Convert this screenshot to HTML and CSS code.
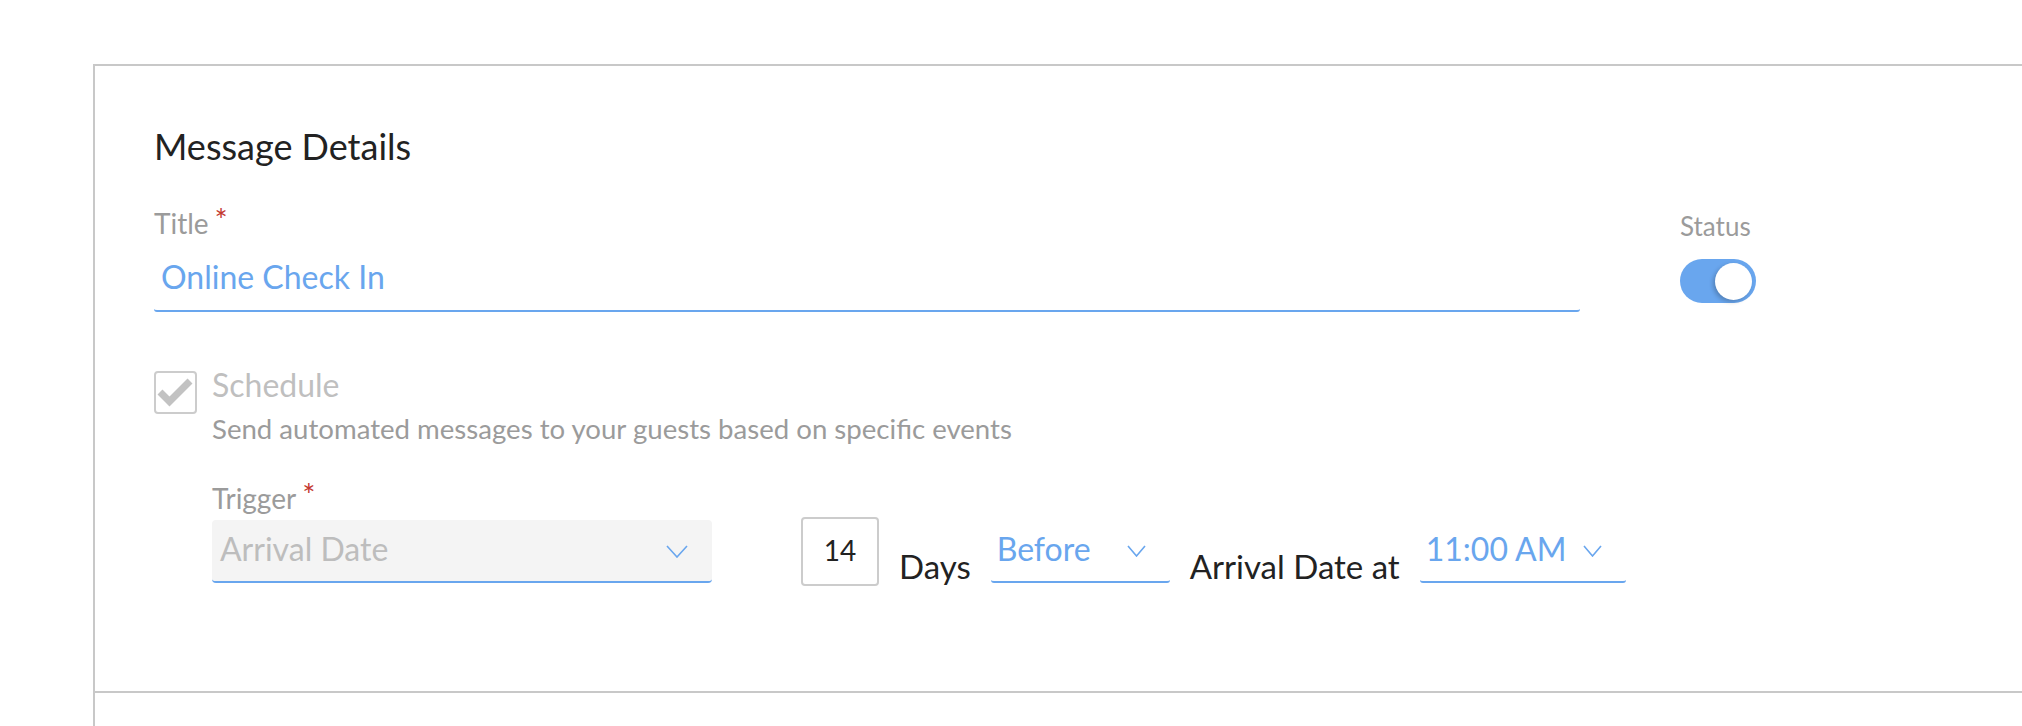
FILE: index.html
```html
<!DOCTYPE html>
<html lang="en">
<head>
<meta charset="utf-8">
<title>Message Details</title>
<link rel="stylesheet" href="styles.css">
</head>
<body>
<div class="page">
  <div class="card">
    <section class="section details">
      <h2 class="section-title">Message Details</h2>
      <div class="title-row">
        <div class="field field-title">
          <label class="field-label">Title<span class="req">*</span></label>
          <div class="text-input">Online Check In</div>
        </div>
        <div class="status">
          <div class="status-label">Status</div>
          <div class="toggle"><span class="knob"></span></div>
        </div>
      </div>
      <div class="schedule">
        <div class="checkbox">
          <svg width="39" height="39" viewBox="0 0 39 39"><polyline points="4,19 13.5,28.5 34,8" fill="none" stroke="#c2c2c2" stroke-width="7"/></svg>
        </div>
        <div class="schedule-body">
          <div class="schedule-title">Schedule</div>
          <div class="schedule-desc">Send automated messages to your guests based on specific events</div>
          <div class="trigger-row">
            <div class="field trigger">
              <label class="field-label">Trigger<span class="req">*</span></label>
              <div class="select select-filled">
                <span class="select-value">Arrival Date</span>
                <svg class="chev chev-lg" width="22" height="13" viewBox="0 0 22 13"><polyline points="1,1 11,12 21,1" fill="none" stroke="#69a6ee" stroke-width="1.6"/></svg>
              </div>
            </div>
            <div class="num-box">14</div>
            <span class="inline-text">Days</span>
            <div class="select select-plain select-before">
              <span class="select-value">Before</span>
              <svg class="chev" width="19" height="12" viewBox="0 0 19 12"><polyline points="1,1 9.5,11 18,1" fill="none" stroke="#69a6ee" stroke-width="1.6"/></svg>
            </div>
            <span class="inline-text">Arrival Date at</span>
            <div class="select select-plain select-time">
              <span class="select-value">11:00 AM</span>
              <svg class="chev" width="19" height="12" viewBox="0 0 19 12"><polyline points="1,1 9.5,11 18,1" fill="none" stroke="#69a6ee" stroke-width="1.6"/></svg>
            </div>
          </div>
        </div>
      </div>
    </section>
    <section class="section next"></section>
  </div>
</div>
</body>
</html>
```

FILE: styles.css
```css
html, body {
  margin: 0;
  padding: 0;
  background: #ffffff;
}

body {
  font-family: Lato, "Open Sans", "Liberation Sans", sans-serif;
  color: #222222;
}

.page {
  width: 100%;
  height: 726px;
  overflow: hidden;
}

.card {
  margin: 64px 0 0 93px;
  width: 2100px;
  border-top: 2px solid #c8c8c8;
  border-left: 2px solid #c8c8c8;
  box-sizing: border-box;
}

.section {
  padding: 58px 0 108px 59px;
  border-bottom: 2px solid #c8c8c8;
}

.section.next {
  height: 200px;
  padding: 0;
  border-bottom: none;
}

.section-title {
  margin: 0 0 38px 0;
  font-size: 36px;
  line-height: 44px;
  font-weight: 400;
  color: #222222;
}

.title-row {
  display: flex;
  align-items: flex-start;
}

.field {
  display: flex;
  flex-direction: column;
}

.field-title {
  flex: 0 0 1426px;
}

.field-label {
  font-size: 28px;
  line-height: 34px;
  color: #9b9b9b;
}

.req {
  color: #c4372f;
  font-size: 31px;
  line-height: 0;
  vertical-align: 3px;
  margin-left: 6px;
}

.text-input {
  margin-top: 8px;
  padding: 10px 7px 14px 7px;
  font-size: 32px;
  line-height: 38px;
  color: #69a6ee;
  border-bottom: 2px solid #69a6ee;
  border-radius: 0 0 3px 3px;
}

.status {
  margin-left: 100px;
  margin-top: 3px;
  display: flex;
  flex-direction: column;
}

.status-label {
  font-size: 26px;
  line-height: 34px;
  color: #9b9b9b;
}

.toggle {
  margin-top: 16px;
  width: 76px;
  height: 44px;
  box-sizing: border-box;
  padding: 3px 4px;
  border-radius: 22px;
  background: #69a6ee;
  display: flex;
  justify-content: flex-end;
  align-items: center;
}

.knob {
  width: 37px;
  height: 37px;
  border-radius: 50%;
  background: #ffffff;
  box-shadow: -2px 2px 4px rgba(0, 0, 0, 0.22);
}

.schedule {
  margin-top: 55px;
  display: flex;
  align-items: flex-start;
  gap: 15px;
}

.checkbox {
  margin-top: 4px;
  width: 43px;
  height: 43px;
  box-sizing: border-box;
  border: 2px solid #cccccc;
  border-radius: 4px;
  display: flex;
  align-items: center;
  justify-content: center;
}

.checkbox svg {
  display: block;
}

.schedule-title {
  font-size: 32px;
  line-height: 36px;
  color: #bfbfbf;
}

.schedule-desc {
  margin-top: 10px;
  font-size: 27.6px;
  line-height: 32px;
  color: #9b9b9b;
}

.trigger-row {
  margin-top: 36px;
  display: flex;
  align-items: flex-end;
  gap: 20px;
}

.trigger {
  width: 500px;
}

.select {
  box-sizing: border-box;
  height: 63px;
  padding: 10px 24px 13px 6px;
  display: flex;
  align-items: center;
  justify-content: space-between;
  border-bottom: 2px solid #69a6ee;
  border-radius: 0 0 3px 3px;
  font-size: 32px;
  line-height: 38px;
  color: #69a6ee;
}

.select-filled {
  margin-top: 5px;
  padding-left: 8px;
  background: #f4f4f4;
  border-radius: 4px;
  color: #bdbdbd;
}

.chev {
  display: block;
  margin-top: 4px;
}

.select-before {
  width: 179px;
}

.select-time {
  width: 206px;
}

.num-box {
  margin-left: 69px;
  margin-bottom: -3px;
  width: 78px;
  height: 69px;
  box-sizing: border-box;
  border: 2px solid #cccccc;
  border-radius: 4px;
  display: flex;
  align-items: center;
  justify-content: center;
  font-size: 28px;
  line-height: 34px;
  color: #222222;
  padding-bottom: 4px;
}

.inline-text {
  font-size: 33px;
  line-height: 34px;
  color: #222222;
  white-space: nowrap;
}
```
